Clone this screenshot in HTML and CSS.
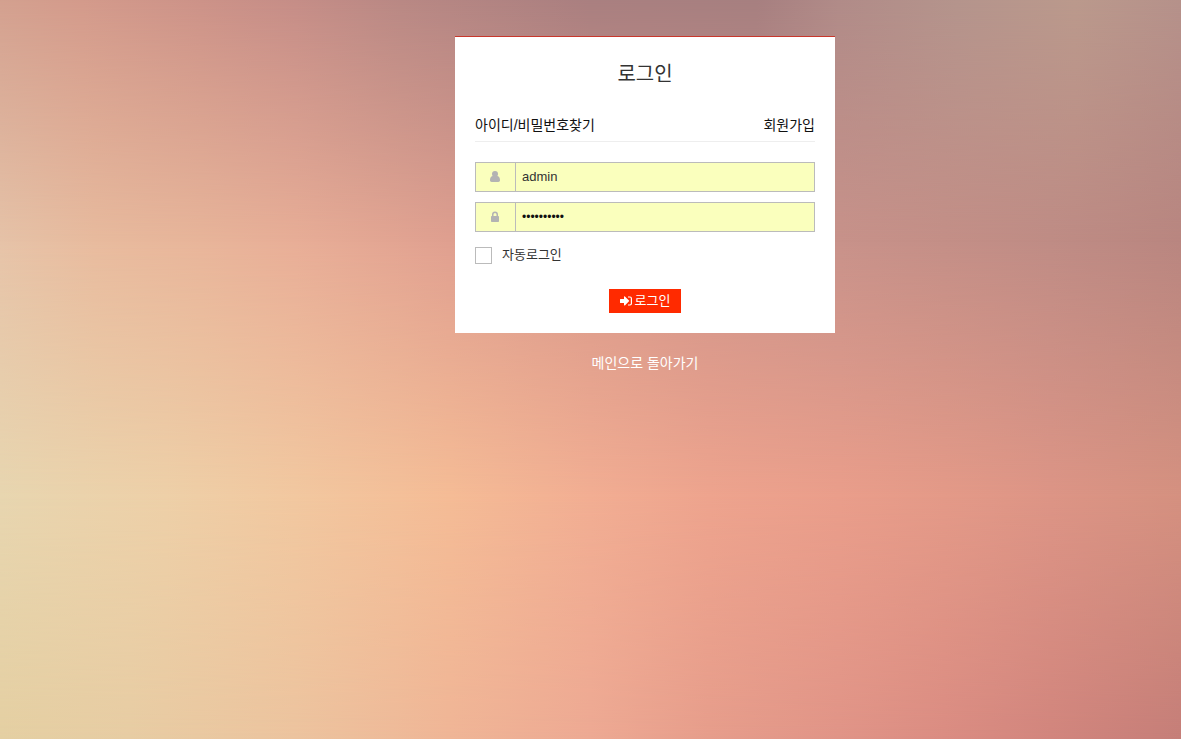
FILE: index.html
```html
<!DOCTYPE html>
<html lang="ko">
<head>
    <meta charset="UTF-8">
    <meta name="viewport" content="width=device-width, initial-scale=1.0">
    <title>로그인</title>
    <link rel="stylesheet" href="styles.css">
</head>
<body>
    <main class="login-page">
        <form class="login-box">
            <h1>로그인</h1>
            <div class="login-links">
                <a href="#">아이디/비밀번호찾기</a>
                <a href="#">회원가입</a>
            </div>
            <div class="input-group">
                <label for="userId" aria-label="아이디">
                    <svg width="10" height="12" viewBox="0 0 10 12"><path d="M5 0a3 3 0 0 1 3 3c0 .8-.2 1.500-.6 2C9.300 5.300 10 7 10 9.300 10 10.400 9.300 11 8.300 11H1.700C.7 11 0 10.400 0 9.300 0 7 .7 5.300 2.600 5 2.200 4.500 2 3.800 2 3a3 3 0 0 1 3-3z"/></svg>
                </label>
                <input type="text" id="userId" value="admin">
            </div>
            <div class="input-group">
                <label for="userPw" aria-label="비밀번호">
                    <svg width="8" height="12" viewBox="0 0 8 12"><path d="M0 5.800C0 5.300.3 5 .8 5H1V3.500a3 3 0 0 1 6 0V5h.2c.5 0 .8.3.8.8v4.400c0 .5-.3.8-.8.8H.8c-.5 0-.8-.3-.8-.8zM2.500 5h3V3.500a1.500 1.500 0 0 0-3 0z"/></svg>
                </label>
                <input type="password" id="userPw" value="password12">
            </div>
            <label class="auto-login"><input type="checkbox">자동로그인</label>
            <button type="submit" class="login-btn">
                <svg width="12" height="10" viewBox="0 0 12 10"><path d="M0 3.600c0-.3.2-.6.5-.6H4V.9c0-.5.5-.7.9-.4L9 4.600c.2.2.2.5 0 .7L4.900 9.400c-.4.4-.9.1-.9-.3V7H.5c-.3 0-.5-.3-.5-.6z"/><path d="M8 1h2c.8 0 1.400.6 1.400 1.400v5.200c0 .8-.6 1.400-1.400 1.400H8" fill="none" stroke="currentColor" stroke-width="1.200"/></svg>
                로그인
            </button>
        </form>
        <a href="#" class="back-link">메인으로 돌아가기</a>
    </main>
</body>
</html>
```

FILE: styles.css
```css
* {
    margin: 0;
    padding: 0;
    box-sizing: border-box;
}

body {
    position: relative;
    z-index: 0;
    min-height: 100vh;
    font-family: "Liberation Sans", "Noto Sans CJK KR", sans-serif;
    font-size: 13px;
    line-height: 20px;
    color: #333;
    background: linear-gradient(90deg, #e8d6b0 0%, #eed0a8 14%, #f2c8a0 25%, #f5bc96 38%, #f2ae93 50%, #eea48e 60%, #ea9e8b 71%, #e49a88 80%, #dd9586 89%, #d59180 100%);
}

/* Background colour bands, faded into each other vertically */
body::before,
body::after,
.login-page::before {
    content: "";
    position: absolute;
    inset: 0;
    z-index: -1;
}

.login-page::before {
    background: linear-gradient(90deg, #e4cfa2 0%, #e7cca3 11%, #ecc39e 25%, #efb596 38%, #eda993 50%, #e69d8b 60%, #e09487 71%, #da8c82 80%, #d1857d 89%, #c57e78 100%);
    mask-image: linear-gradient(transparent 67%, #000 100%);
}

body::before {
    background: linear-gradient(90deg, #e6c3a8 0%, #e8bb9e 8%, #e8b59a 17%, #e8ae97 25%, #e0a090 38%, #d8988a 50%, #d0948a 60%, #c8928a 71%, #c48f87 80%, #bf8c85 89%, #b98680 100%);
    mask-image: linear-gradient(#000 33%, transparent 67%);
}

body::after {
    background: linear-gradient(90deg, #d3a08f 0%, #d39a8b 7%, #cc9288 17%, #c58d87 25%, #b88884 34%, #a97f80 50%, #a67f80 64%, #b08b88 71%, #b4948c 81%, #ba998c 91%, #b5918a 100%);
    mask-image: linear-gradient(#000 0%, transparent 33%);
}

svg {
    fill: currentColor;
}

a {
    color: #111;
    text-decoration: none;
}

.login-page {
    display: flex;
    flex-direction: column;
    align-items: center;
    gap: 20px;
    padding: 36px 0 36px 109px;
}

.login-box {
    width: 100%;
    max-width: 380px;
    padding: 20px;
    background: #fff;
    border-top: 1px solid #c9372c;
}

h1 {
    margin-bottom: 24px;
    font-size: 20px;
    font-weight: 400;
    line-height: 34px;
    text-align: center;
}

.login-links {
    display: flex;
    justify-content: space-between;
    margin-bottom: 20px;
    padding-bottom: 6px;
    border-bottom: 1px solid #eee;
    font-size: 14px;
}

.input-group {
    display: flex;
    height: 30px;
    margin-bottom: 10px;
    border: 1px solid #bbb;
    background: #faffbd;
}

.input-group label {
    display: flex;
    align-items: center;
    justify-content: center;
    width: 40px;
    padding-right: 2px;
    border-right: 1px solid #bbb;
    color: #b3b3b3;
}

.input-group input {
    flex: 1;
    min-width: 0;
    padding: 0 6px;
    border: none;
    outline: none;
    background: transparent;
    font: inherit;
    color: #333;
}

.input-group input[type="password"] {
    font-size: 12px;
    color: #111;
}

.auto-login {
    display: flex;
    align-items: center;
    gap: 10px;
    padding-top: 3px;
}

.auto-login input {
    appearance: none;
    width: 17px;
    height: 17px;
    border: 1px solid #bbb;
    background: #fff;
}

.login-btn {
    display: flex;
    align-items: center;
    gap: 3px;
    height: 24px;
    margin: 24px auto 0;
    padding: 0 11px;
    border: none;
    background: #ff2a00;
    color: #fff;
    font: inherit;
    cursor: pointer;
}

.back-link {
    font-size: 14px;
    color: #fff;
}
```
